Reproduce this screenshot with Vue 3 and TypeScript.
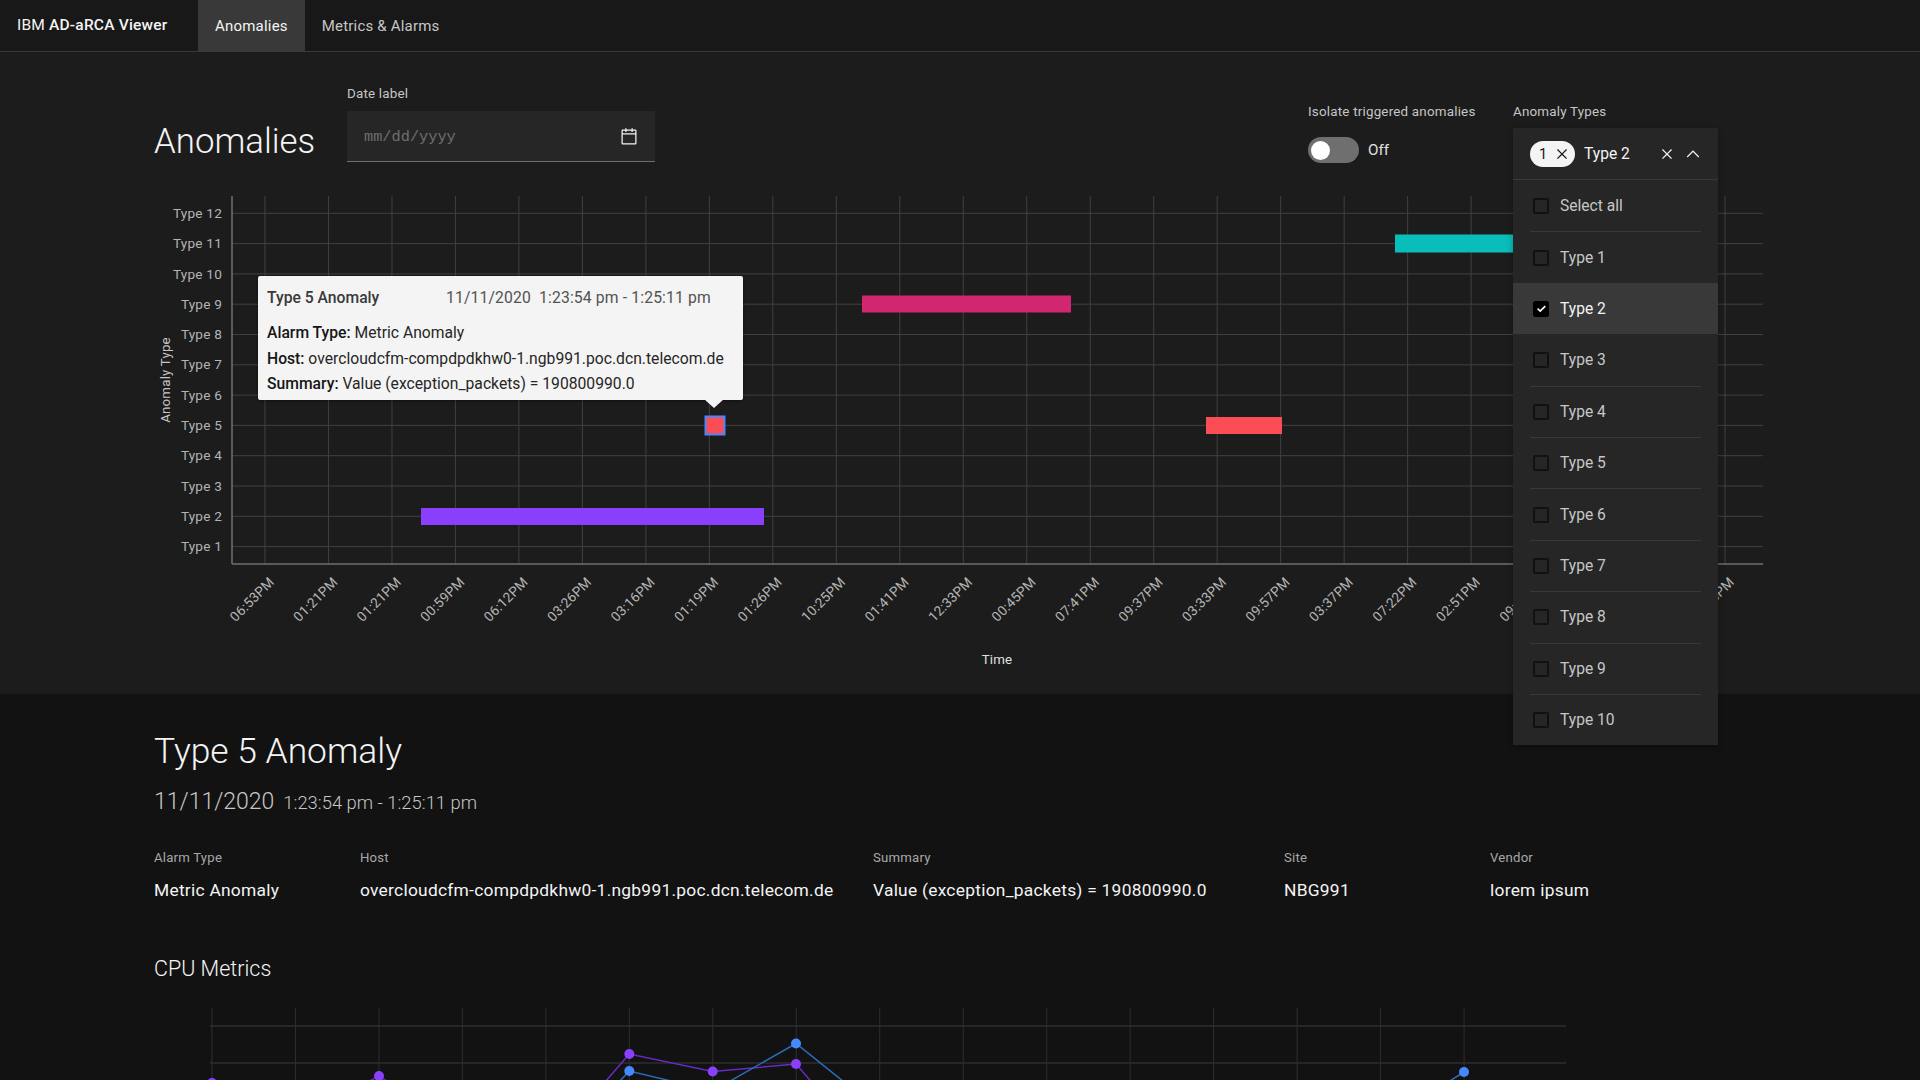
<script setup lang="ts">
const types: string[] = Array.from({ length: 12 }, (_, i) => `Type ${12 - i}`)
const rowY = (i: number): number => 213.3 + i * 30.3
const times: string[] = [
  '06:53PM', '01:21PM', '01:21PM', '00:59PM', '06:12PM', '03:26PM', '03:16PM', '01:19PM',
  '01:26PM', '10:25PM', '01:41PM', '12:33PM', '00:45PM', '07:41PM', '09:37PM', '03:33PM',
  '09:57PM', '03:37PM', '07:22PM', '02:51PM', '09:14PM', '11:02PM', '04:48PM', '08:35PM',
]
const tickX = (i: number): number => 265 + i * 63.48
const bars = [
  { x: 1395, y: 234.5, w: 125, h: 18, fill: '#08bdba' },
  { x: 862, y: 295.5, w: 209, h: 17, fill: '#d12771' },
  { x: 1206, y: 417, w: 76, h: 17, fill: '#fa4d56' },
  { x: 421, y: 508, w: 343, h: 17, fill: '#8a3ffc' },
]
const options: string[] = ['Select all', ...Array.from({ length: 10 }, (_, i) => `Type ${i + 1}`)]
const details = [
  { label: 'Alarm Type', value: 'Metric Anomaly' },
  { label: 'Host', value: 'overcloudcfm-compdpdkhw0-1.ngb991.poc.dcn.telecom.de' },
  { label: 'Summary', value: 'Value (exception_packets) = 190800990.0' },
  { label: 'Site', value: 'NBG991' },
  { label: 'Vendor', value: 'lorem ipsum' },
]
const cpuX: number[] = Array.from({ length: 16 }, (_, i) => 212 + i * 83.47)
const cpuY: number[] = [1026, 1063, 1100, 1137]
const purple = [[212, 1083], [295, 1120], [379, 1076], [462, 1130], [546, 1150], [629.3, 1054], [712.7, 1071.5], [796, 1064], [879, 1160]]
const blue = [[546, 1160], [629.3, 1071], [712.7, 1091], [796, 1043.5], [879, 1110], [963, 1160]]
const blue2 = [[1380, 1125], [1464, 1072]]
const pts = (p: number[][]): string => p.map((q) => q.join(',')).join(' ')
</script>

<template>
  <div class="page">
    <header class="topbar">
      <div class="brand">IBM <b>AD-aRCA Viewer</b></div>
      <nav class="tabs">
        <a class="tab active">Anomalies</a>
        <a class="tab">Metrics &amp; Alarms</a>
      </nav>
    </header>

    <section class="overview">
      <div class="controls">
        <h1 class="title">Anomalies</h1>
        <div class="date-group">
          <label class="label">Date label</label>
          <div class="date-field">
            <span class="placeholder">mm/dd/yyyy</span>
            <svg class="icon" viewBox="0 0 16 16" fill="#f4f4f4">
              <path d="M13,2H11V1H10V2H6V1H5V2H3A1,1,0,0,0,2,3V13a1,1,0,0,0,1,1H13a1,1,0,0,0,1-1V3A1,1,0,0,0,13,2Zm0,11H3V6H13Zm0-8H3V3H5V4H6V3h4V4h1V3h2Z" />
            </svg>
          </div>
        </div>
        <div class="toggle-group">
          <label class="label">Isolate triggered anomalies</label>
          <div class="toggle-row">
            <span class="track"><span class="knob"></span></span>
            <span class="off">Off</span>
          </div>
        </div>
        <div class="select-group">
          <label class="label">Anomaly Types</label>
          <div class="select">
            <div class="select-head">
              <span class="chip">
                <span>1</span>
                <svg class="chip-x" viewBox="0 0 16 16" fill="#161616"><path d="M12 4.7L11.3 4 8 7.3 4.7 4 4 4.7 7.3 8 4 11.3 4.7 12 8 8.7 11.3 12 12 11.3 8.7 8z" /></svg>
              </span>
              <span class="sel-text">Type 2</span>
              <svg class="icon head-x" viewBox="0 0 16 16" fill="#f4f4f4"><path d="M12 4.7L11.3 4 8 7.3 4.7 4 4 4.7 7.3 8 4 11.3 4.7 12 8 8.7 11.3 12 12 11.3 8.7 8z" /></svg>
              <svg class="icon head-up" viewBox="0 0 16 16" fill="#f4f4f4"><path d="M8 5L13 10 12.3 10.7 8 6.4 3.7 10.7 3 10z" /></svg>
            </div>
            <ul class="menu">
              <li v-for="o in options" :key="o" class="opt" :class="{ selected: o === 'Type 2' }">
                <span class="opt-inner">
                  <span class="box">
                    <svg v-if="o === 'Type 2'" viewBox="0 0 16 16" class="check"><path d="M3.2 8.2 L6.4 11.2 L12.6 5" fill="none" stroke="#fff" stroke-width="2" /></svg>
                  </span>
                  <span>{{ o }}</span>
                </span>
              </li>
            </ul>
          </div>
        </div>
      </div>

      <div class="chart-wrap">
        <svg class="gantt" viewBox="0 196 1920 498" width="1920" height="498">
          <line v-for="(t, i) in times" :key="'v' + i" :x1="tickX(i)" :x2="tickX(i)" y1="196" y2="564" class="grid" />
          <line v-for="(t, i) in types" :key="'h' + i" x1="232" x2="1763" :y1="rowY(i)" :y2="rowY(i)" class="grid" />
          <line x1="232" x2="232" y1="196" y2="564" class="axis" />
          <line x1="232" x2="1763" y1="564" y2="564" class="axis" />
          <text v-for="(t, i) in types" :key="'l' + i" x="222" :y="rowY(i) + 4.6" text-anchor="end" class="tick">{{ t }}</text>
          <text v-for="(t, i) in times" :key="'t' + i" :x="tickX(i) + 10" :y="583" text-anchor="end" class="tick" :transform="`rotate(-45 ${tickX(i) + 10} 583)`">{{ t }}</text>
          <text x="0" y="0" text-anchor="middle" class="axis-title" transform="translate(170 380) rotate(-90)">Anomaly Type</text>
          <text x="997" y="664" text-anchor="middle" class="axis-title time">Time</text>
          <rect v-for="b in bars" :key="b.x" :x="b.x" :y="b.y" :width="b.w" :height="b.h" :fill="b.fill" />
          <rect x="705.5" y="416.5" width="19" height="18" fill="#fa4d56" stroke="#4589ff" stroke-width="2" />
        </svg>
        <div class="tooltip">
          <div class="tip-head"><b>Type 5 Anomaly</b><span>11/11/2020&nbsp; 1:23:54 pm - 1:25:11 pm</span></div>
          <p><b>Alarm Type:</b> Metric Anomaly</p>
          <p><b>Host:</b> overcloudcfm-compdpdkhw0-1.ngb991.poc.dcn.telecom.de</p>
          <p><b>Summary:</b> Value (exception_packets) = 190800990.0</p>
        </div>
      </div>
    </section>

    <section class="detail">
      <h2 class="d-title">Type 5 Anomaly</h2>
      <div class="d-when"><span class="d-date">11/11/2020</span><span class="d-time">1:23:54 pm - 1:25:11 pm</span></div>
      <div class="d-grid">
        <div v-for="d in details" :key="d.label">
          <div class="d-label">{{ d.label }}</div>
          <div class="d-value">{{ d.value }}</div>
        </div>
      </div>
      <h3 class="d-sub">CPU Metrics</h3>
      <svg class="cpu" viewBox="0 1008 1920 200" width="1920" height="200">
        <line v-for="x in cpuX" :key="x" :x1="x" :x2="x" y1="1008" y2="1208" class="cgrid" />
        <line v-for="y in cpuY" :key="y" x1="210" x2="1566" :y1="y" :y2="y" class="cgrid-h" />
        <polyline :points="pts(purple)" fill="none" stroke="#6929c4" stroke-width="1.5" />
        <polyline :points="pts(blue)" fill="none" stroke="#2b6cb8" stroke-width="1.5" />
        <polyline :points="pts(blue2)" fill="none" stroke="#2b6cb8" stroke-width="1.5" />
        <circle v-for="p in purple" :key="'p' + p[0]" :cx="p[0]" :cy="p[1]" r="5" fill="#8a3ffc" />
        <circle v-for="p in blue" :key="'b' + p[0]" :cx="p[0]" :cy="p[1]" r="5" fill="#4589ff" />
        <circle v-for="p in blue2" :key="'c' + p[0]" :cx="p[0]" :cy="p[1]" r="5" fill="#4589ff" />
      </svg>
    </section>
  </div>
</template>

<style>
html, body { margin: 0; height: 1080px; overflow: hidden; background: #121212; }
</style>

<style scoped>
.page {
  width: 1920px; height: 1080px; overflow: hidden;
  font-family: Roboto, "Open Sans", sans-serif; color: #f4f4f4; background: #121212;
}
.topbar { display: flex; height: 51px; background: #181818; border-bottom: 1px solid #393939; }
.brand { width: 198px; padding-left: 17px; box-sizing: border-box; font-size: 15.5px; line-height: 50px; letter-spacing: .2px; }
.brand b { font-weight: 500; }
.tabs { display: flex; }
.tab { padding: 0 17px; font-size: 15px; line-height: 52px; color: #c6c6c6; letter-spacing: .2px; }
.tab.active { background: #393939; color: #f4f4f4; height: 52px; }

.overview { height: 642px; background: #1c1c1c; }
.controls { display: flex; height: 144px; padding-left: 154px; }
.title { margin: 69px 33px 0 0; width: 160px; font-size: 34.8px; line-height: 40px; font-weight: 300; white-space: nowrap; }
.label { display: block; font-size: 13.4px; line-height: 18px; color: #c6c6c6; letter-spacing: .2px; white-space: nowrap; }
.date-group { margin-top: 33px; width: 308px; }
.date-group .label { margin-bottom: 8px; }
.date-field { display: flex; align-items: center; justify-content: space-between; box-sizing: border-box; height: 51px; padding: 1px 16px 0 17px; background: #262626; border-bottom: 1px solid #6f6f6f; }
.placeholder { font-family: "Liberation Mono", monospace; font-size: 15.3px; color: #6f6f6f; }
.icon { width: 20px; height: 20px; flex: none; }
.toggle-group { margin: 51px 0 0 653px; width: 205px; }
.toggle-row { display: flex; align-items: center; gap: 9px; margin-top: 16px; }
.track { display: flex; align-items: center; width: 51px; height: 26px; border-radius: 13px; background: #6f6f6f; padding-left: 3px; box-sizing: border-box; }
.knob { width: 19px; height: 19px; border-radius: 50%; background: #fff; }
.off { font-size: 15.2px; color: #e0e0e0; }
.select-group { margin-top: 51px; width: 205px; position: relative; z-index: 2; }
.select { margin-top: 7px; background: #262626; box-shadow: 0 2px 6px rgba(0, 0, 0, .3); }
.select-head { display: flex; align-items: center; height: 52px; box-sizing: border-box; padding: 1px 0 0 17px; border-bottom: 1px solid #393939; }
.chip { display: flex; align-items: center; justify-content: space-between; width: 45px; height: 26px; box-sizing: border-box; padding: 0 3px 0 9px; border-radius: 13px; background: #f4f4f4; color: #161616; font-size: 14.5px; }
.chip-x { width: 20px; height: 20px; }
.sel-text { margin-left: 9px; width: 73px; font-size: 15.6px; color: #f4f4f4; }
.head-x { margin-right: 6px; }
.menu { list-style: none; margin: 0; padding: 0; }
.opt { height: 51.4px; padding: 0 17px; box-sizing: border-box; }
.opt-inner { display: flex; align-items: center; gap: 11px; height: 100%; padding-left: 3px; border-top: 1px solid #393939; box-sizing: border-box; font-size: 15.6px; color: #c6c6c6; }
.opt:first-child .opt-inner,
.opt.selected .opt-inner,
.opt.selected + .opt .opt-inner { border-top-color: transparent; }
.opt.selected { background: #393939; }
.opt.selected .opt-inner { color: #f4f4f4; }
.box { display: flex; align-items: center; justify-content: center; width: 16px; height: 16px; box-sizing: border-box; border: 2px solid #111; border-radius: 2px; flex: none; }
.selected .box { background: #000; border-color: #000; }
.check { display: block; width: 13px; height: 13px; flex: none; }

.chart-wrap { position: relative; height: 498px; }
.gantt { display: block; }
.grid { stroke: #404040; stroke-width: 1; }
.axis { stroke: #6f6f6f; stroke-width: 1.5; }
.tick { font-size: 13.6px; fill: #b4b4b4; letter-spacing: .2px; }
.axis-title { font-size: 13.3px; fill: #c6c6c6; letter-spacing: .2px; }
.time { fill: #e0e0e0; }
.tooltip {
  position: absolute; left: 258px; top: 80px; width: 485px; height: 124px; box-sizing: border-box;
  padding: 11px 9px; background: #f4f4f4; color: #393939; border-radius: 2px; box-shadow: 0 1px 3px rgba(0, 0, 0, .4);
  font-size: 15.7px; line-height: 25.5px;
}
.tooltip::after {
  content: ""; position: absolute; left: 446px; bottom: -8px; border-left: 10px solid transparent; border-right: 10px solid transparent; border-top: 9px solid #f4f4f4;
}
.tooltip b { font-weight: 500; color: #161616; }
.tooltip p { margin: 0; color: #262626; }
.tip-head { display: flex; height: 33px; line-height: 22px; }
.tip-head b { width: 179px; color: #393939; }
.tip-head span { color: #525252; letter-spacing: .15px; }

.detail { padding: 35px 0 0 154px; background: #121212; }
.d-title { margin: 0; font-size: 35.4px; line-height: 44px; font-weight: 300; }
.d-when { display: flex; align-items: baseline; gap: 9px; margin-top: 15px; height: 30px; color: #c6c6c6; }
.d-date { font-size: 23px; font-weight: 300; }
.d-time { font-size: 18.4px; font-weight: 300; }
.d-grid { display: grid; grid-template-columns: 206px 513px 411px 206px auto; margin-top: 31px; }
.d-label { font-size: 13.2px; line-height: 18px; color: #a8a8a8; letter-spacing: .2px; }
.d-value { margin-top: 11px; font-size: 17.4px; line-height: 24px; color: #f4f4f4; white-space: nowrap; letter-spacing: .25px; }
.d-sub { margin: 53px 0 25px; font-size: 21.5px; line-height: 28px; font-weight: 300; }
.cpu { display: block; margin-left: -154px; }
.cgrid { stroke: #2e2e2e; stroke-width: 1; }
.cgrid-h { stroke: #2e2e2e; stroke-width: 1.5; }
</style>
